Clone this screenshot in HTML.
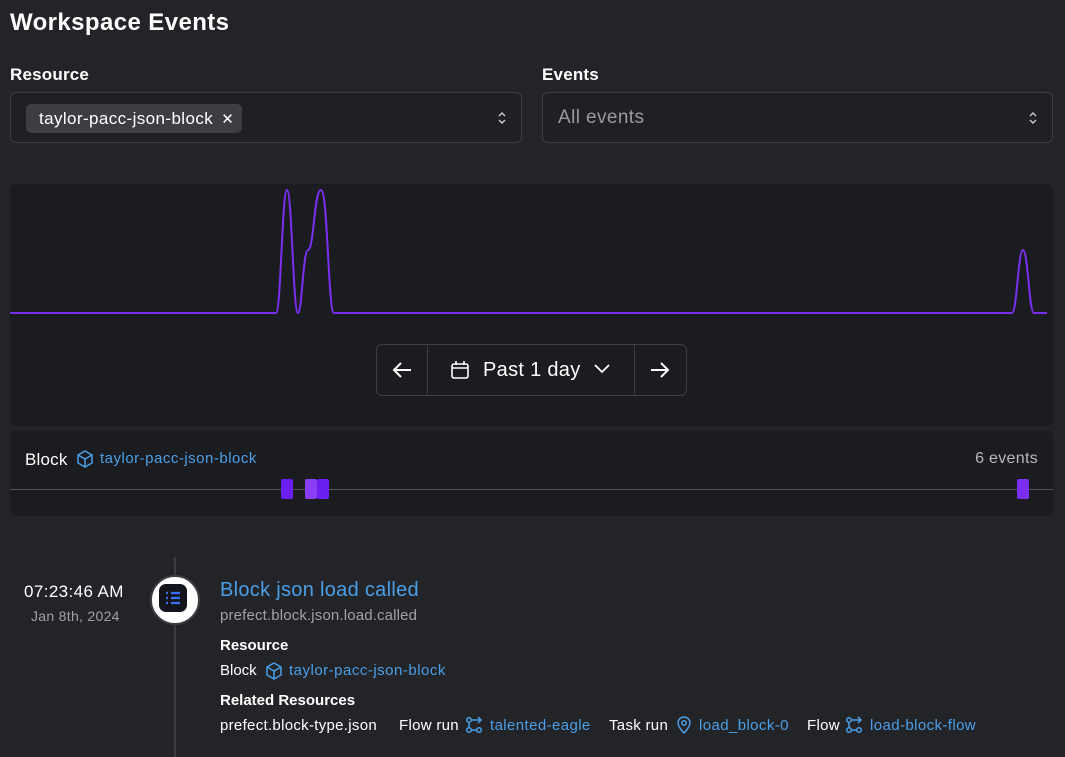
<!DOCTYPE html>
<html><head><style>
body{margin:0;width:1065px;height:757px;background:#232428;color:#fff;font-family:"Liberation Sans",sans-serif;position:relative;overflow:hidden}
.a{position:absolute;white-space:nowrap}
.sel{position:absolute;top:92px;height:51px;border:1px solid #3c3d42;border-radius:6px;background:#1f2023;box-sizing:border-box}
.blue{color:#4a9fe8}
.ic{display:inline-block;vertical-align:-3px;margin:0 4px 0 2px}
</style></head><body>
<div class="a" style="left:10px;top:9px;font-size:24px;font-weight:bold;letter-spacing:0.4px">Workspace Events</div>
<div class="a" style="left:10px;top:65px;font-size:17px;font-weight:bold;letter-spacing:0.2px">Resource</div>
<div class="a" style="left:542px;top:65px;font-size:17px;font-weight:bold;letter-spacing:0.2px">Events</div>
<div class="sel" style="left:10px;width:512px">
 <div class="a" style="left:15px;top:11px;height:29px;background:#3d3e44;border-radius:5px;padding:0 8px 0 13px;font-size:17px;line-height:29px;letter-spacing:0.4px">taylor-pacc-json-block <span style="font-size:15px;margin-left:3px">✕</span></div>
 <svg class="a" style="right:14px;top:18px" width="10" height="14"><path d="M2 5L5 2L8 5M2 9L5 12L8 9" fill="none" stroke="#ccc" stroke-width="1.4"/></svg>
</div>
<div class="sel" style="left:542px;width:511px">
 <div class="a" style="left:15px;top:14px;font-size:19px;color:#9a9ba0;letter-spacing:0.4px">All events</div>
 <svg class="a" style="right:14px;top:18px" width="10" height="14"><path d="M2 5L5 2L8 5M2 9L5 12L8 9" fill="none" stroke="#ccc" stroke-width="1.4"/></svg>
</div>
<div class="a" style="left:10px;top:184px;width:1043px;height:242px;background:#1b1c1f;border-radius:6px"></div>
<svg class="a" style="left:0;top:0" width="1065" height="430">
<path d="M10 313 L276 313 C281 313 282 190 287 190 C292 190 293 313 298 313 C302 313 303 250 308 250 C314 250 314 190 321 190 C328 190 328 313 334 313 L1012 313 C1017 313 1018 250 1023 250 C1028 250 1029 313 1034 313 L1047 313" fill="none" stroke="#7a2ff0" stroke-width="2"/>
</svg>
<div class="a" style="left:376px;top:344px;width:311px;height:52px;border:1px solid #3c3d42;border-radius:6px;box-sizing:border-box;background:#1b1c1f">
 <div class="a" style="left:50px;top:0;width:1px;height:50px;background:#3c3d42"></div>
 <div class="a" style="left:257px;top:0;width:1px;height:50px;background:#3c3d42"></div>
 <svg class="a" style="left:14px;top:14px" width="22" height="22"><path d="M20 11H3M10 4L3 11L10 18" fill="none" stroke="#fff" stroke-width="2"/></svg>
 <svg class="a" style="left:73px;top:15px" width="20" height="20"><rect x="2" y="4" width="16" height="14" rx="2" fill="none" stroke="#fff" stroke-width="1.6"/><path d="M2 8H18M6 1V5M14 1V5" stroke="#fff" stroke-width="1.6"/></svg>
 <div class="a" style="left:106px;top:14px;font-size:20px;letter-spacing:0.3px">Past 1 day</div>
 <svg class="a" style="left:216px;top:18px" width="18" height="12"><path d="M2 2L9 9L16 2" fill="none" stroke="#fff" stroke-width="1.8"/></svg>
 <svg class="a" style="left:272px;top:14px" width="22" height="22"><path d="M2 11H19M12 4L19 11L12 18" fill="none" stroke="#fff" stroke-width="2"/></svg>
</div>
<div class="a" style="left:10px;top:431px;width:1043px;height:85px;background:#1b1c1f;border-radius:6px"></div>
<div class="a" style="left:25px;top:450px;font-size:17px;letter-spacing:0.2px">Block</div>
<svg class="a" style="left:76px;top:450px" width="18" height="18"><path d="M9 1L16 5V13L9 17L2 13V5Z M2 5L9 9L16 5 M9 9V17" fill="none" stroke="#4a9fe8" stroke-width="1.5"/></svg>
<div class="a blue" style="left:100px;top:450px;font-size:15px;letter-spacing:0.5px">taylor-pacc-json-block</div>
<div class="a" style="right:27px;top:450px;font-size:16px;color:#b8b9bd;letter-spacing:0.3px">6 events</div>
<div class="a" style="left:10px;top:489px;width:1043px;height:1px;background:#55565b"></div>
<div class="a" style="left:281px;top:479px;width:12px;height:20px;background:#6a1ff0;border-radius:2px"></div>
<div class="a" style="left:305px;top:479px;width:12px;height:20px;background:#8a3ff5;border-radius:2px"></div>
<div class="a" style="left:317px;top:479px;width:12px;height:20px;background:#6a1ff0;border-radius:2px"></div>
<div class="a" style="left:1017px;top:479px;width:12px;height:20px;background:#7a2ff0;border-radius:2px"></div>
<div class="a" style="left:174px;top:557px;width:2px;height:200px;background:#3c3d42"></div>
<div class="a" style="left:24px;top:582px;font-size:17px;letter-spacing:0.4px">07:23:46 AM</div>
<div class="a" style="left:31px;top:608px;font-size:14px;color:#a0a1a6;letter-spacing:0.3px">Jan 8th, 2024</div>
<div class="a" style="left:150px;top:575px;width:46px;height:46px;border-radius:50%;background:#fff;border:2px solid #3c3d42"></div>
<div class="a" style="left:159px;top:584px;width:28px;height:28px;border-radius:7px;background:#14151a"></div>
<svg class="a" style="left:163px;top:590px" width="20" height="16"><path d="M3 3H5M8 3H17M3 8H5M8 8H17M3 13H5M8 13H17" stroke="#3a6ff0" stroke-width="2.2"/></svg>
<div class="a blue" style="left:220px;top:579px;font-size:20px;letter-spacing:0.3px">Block json load called</div>
<div class="a" style="left:220px;top:607px;font-size:15px;color:#a0a1a6;letter-spacing:0.15px">prefect.block.json.load.called</div>
<div class="a" style="left:220px;top:637px;font-size:15px;font-weight:bold">Resource</div>
<div class="a" style="left:220px;top:662px;font-size:15px">Block</div>
<svg class="a" style="left:265px;top:662px" width="18" height="18"><path d="M9 1L16 5V13L9 17L2 13V5Z M2 5L9 9L16 5 M9 9V17" fill="none" stroke="#4a9fe8" stroke-width="1.5"/></svg>
<div class="a blue" style="left:289px;top:662px;font-size:15px;letter-spacing:0.5px">taylor-pacc-json-block</div>
<div class="a" style="left:220px;top:692px;font-size:15px;font-weight:bold">Related Resources</div>
<div class="a" style="left:220px;top:717px;font-size:15px;letter-spacing:0.3px">prefect.block-type.json</div>
<div class="a" style="left:399px;top:717px;font-size:15px;letter-spacing:0.3px">Flow run</div>
<svg class="a" style="left:465px;top:716px" width="20" height="18"><g fill="none" stroke="#4a9fe8" stroke-width="1.5"><circle cx="4" cy="4" r="2.3"/><circle cx="4" cy="14" r="2.3"/><circle cx="14" cy="14" r="2.3"/><path d="M7 4H16M13 1L16 4L13 7M4 7V11M7 14H11"/></g></svg>
<div class="a blue" style="left:490px;top:717px;font-size:15px;letter-spacing:0.4px">talented-eagle</div>
<div class="a" style="left:609px;top:717px;font-size:15px;letter-spacing:0.3px">Task run</div>
<svg class="a" style="left:676px;top:716px" width="16" height="18"><g fill="none" stroke="#4a9fe8" stroke-width="1.5"><path d="M8 17C8 17 2 11 2 7A6 6 0 0 1 14 7C14 11 8 17 8 17Z"/><circle cx="8" cy="7" r="2.2"/></g></svg>
<div class="a blue" style="left:699px;top:717px;font-size:15px;letter-spacing:0.4px">load_block-0</div>
<div class="a" style="left:807px;top:717px;font-size:15px;letter-spacing:0.3px">Flow</div>
<svg class="a" style="left:845px;top:716px" width="20" height="18"><g fill="none" stroke="#4a9fe8" stroke-width="1.5"><circle cx="4" cy="4" r="2.3"/><circle cx="4" cy="14" r="2.3"/><circle cx="14" cy="14" r="2.3"/><path d="M7 4H16M13 1L16 4L13 7M4 7V11M7 14H11"/></g></svg>
<div class="a blue" style="left:870px;top:717px;font-size:15px;letter-spacing:0.4px">load-block-flow</div>
</body></html>
